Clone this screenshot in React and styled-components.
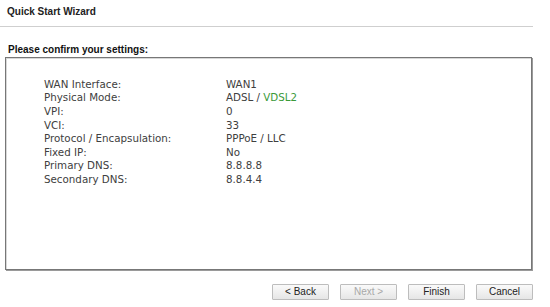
import React from "react";
import styled, { createGlobalStyle } from "styled-components";

const Global = createGlobalStyle`
  html, body { margin: 0; padding: 0; background: #fff; }
  body { width: 550px; height: 307px; overflow: hidden; }
`;

const Page = styled.div`
  width: 550px;
  height: 307px;
  display: flex;
  flex-direction: column;
  font-family: "Liberation Sans", Arial, sans-serif;
`;

const Header = styled.div`
  width: 526px;
  height: 26px;
  padding-left: 7px;
  display: flex;
  align-items: center;
  border-bottom: 1px solid #cfcfcf;
  box-sizing: content-box;
`;

const Title = styled.h1`
  margin: 0;
  font-size: 10px;
  font-weight: bold;
  color: #222;
  line-height: 12px;
  margin-top: -2px;
`;

const SubHeading = styled.h2`
  margin: 17px 0 1px 8px;
  font-size: 10px;
  font-weight: bold;
  color: #111;
  line-height: 12px;
`;

const Box = styled.div`
  margin-left: 5px;
  width: 527px;
  height: 213px;
  border: 1px solid #777;
  box-shadow: 1px 1px 0 #9a9a9a, inset 1px 1px 0 #d8d8d8;
  padding: 19px 0 0 38px;
  box-sizing: border-box;
`;

const Grid = styled.div`
  display: grid;
  grid-template-columns: 182px auto;
  grid-auto-rows: 13.6px;
  align-items: center;
  font-family: "DejaVu Sans", Verdana, sans-serif;
  font-size: 10.3px;
  color: #404040;
`;

const Cell = styled.div`
  white-space: nowrap;
  line-height: 12px;
`;

const Green = styled.span`
  color: #3a9a3a;
`;

const Buttons = styled.div`
  display: flex;
  justify-content: flex-end;
  gap: 11px;
  width: 533px;
  margin-top: 14px;
`;

const Button = styled.button`
  width: 57px;
  height: 16px;
  padding: 0;
  font-family: "Liberation Sans", Arial, sans-serif;
  font-size: 10px;
  line-height: 14px;
  color: ${(p) => (p.disabled ? "#a8a8a8" : "#222")};
  background: linear-gradient(#fafafa, #e6e6e6);
  border: 1px solid #bdbdbd;
  border-radius: 1px;
`;

const rows = [
  ["WAN Interface:", "WAN1"],
  ["Physical Mode:", <>ADSL / <Green>VDSL2</Green></>],
  ["VPI:", "0"],
  ["VCI:", "33"],
  ["Protocol / Encapsulation:", "PPPoE / LLC"],
  ["Fixed IP:", "No"],
  ["Primary DNS:", "8.8.8.8"],
  ["Secondary DNS:", "8.8.4.4"],
];

export default function App() {
  return (
    <>
      <Global />
      <Page>
        <Header>
          <Title>Quick Start Wizard</Title>
        </Header>
        <SubHeading>Please confirm your settings:</SubHeading>
        <Box>
          <Grid>
            {rows.map(([k, v], i) => (
              <React.Fragment key={i}>
                <Cell>{k}</Cell>
                <Cell>{v}</Cell>
              </React.Fragment>
            ))}
          </Grid>
        </Box>
        <Buttons>
          <Button>&lt; Back</Button>
          <Button disabled>Next &gt;</Button>
          <Button>Finish</Button>
          <Button>Cancel</Button>
        </Buttons>
      </Page>
    </>
  );
}
